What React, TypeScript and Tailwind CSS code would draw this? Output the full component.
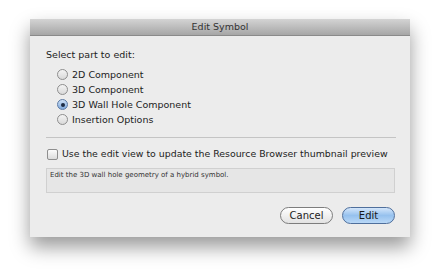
const font = "font-['DejaVu_Sans','Liberation_Sans',sans-serif]"

const parts = [
  { label: '2D Component', checked: false },
  { label: '3D Component', checked: false },
  { label: '3D Wall Hole Component', checked: true },
  { label: 'Insertion Options', checked: false },
]

function Radio({ checked }: { checked: boolean }) {
  return checked ? (
    <span className="flex h-[11px] w-[11px] shrink-0 items-center justify-center rounded-full border border-[#5b7aa6] bg-gradient-to-b from-[#cfe2f7] to-[#7fa9dc]">
      <span className="h-[4px] w-[4px] rounded-full bg-[#1d2c44]" />
    </span>
  ) : (
    <span className="h-[11px] w-[11px] shrink-0 rounded-full border border-[#8e8e8e] bg-gradient-to-b from-[#f4f4f4] to-[#d9d9d9]" />
  )
}

export default function App() {
  return (
    <div className={`h-[280px] w-[441px] bg-white pl-[30px] pt-[19px] ${font}`}>
      <div className="flex h-[218px] w-[380px] flex-col bg-[#ececec] shadow-[0_10px_18px_rgba(0,0,0,0.4)]">
        <div className="flex h-[17px] items-center justify-center border-b border-[#8a8a8a] bg-gradient-to-b from-[#d4d4d4] to-[#a6a6a6] text-[9.5px] text-[#333]">
          Edit Symbol
        </div>

        <div className="flex flex-1 flex-col pl-[16px] pr-[14px] text-[9.5px] text-[#222]">
          <div className="mt-[13px] leading-[12px]">Select part to edit:</div>

          <div className="mt-[6px] flex flex-col pl-[11px]">
            {parts.map((p) => (
              <div key={p.label} className="flex h-[15px] items-center gap-[4px]">
                <Radio checked={p.checked} />
                <span className="leading-[12px]">{p.label}</span>
              </div>
            ))}
          </div>

          <div className="mt-[10px] h-px bg-[#c4c4c4]" />

          <div className="mt-[10px] flex items-center gap-[4px] whitespace-nowrap pl-px">
            <span className="h-[11px] w-[11px] shrink-0 rounded-[2px] border border-[#8e8e8e] bg-gradient-to-b from-[#fbfbfb] to-[#dcdcdc]" />
            <span className="text-[9.4px] leading-[12px]">Use the edit view to update the Resource Browser thumbnail preview</span>
          </div>

          <div className="mr-px mt-[8px] h-[25px] border border-[#d0d0d0] bg-[#e6e6e6] px-[3px] pt-[2px] text-[7px] leading-[9px] text-[#333]">
            Edit the 3D wall hole geometry of a hybrid symbol.
          </div>

          <div className="mt-[14px] flex justify-end gap-[9px] pr-px">
            <button className="h-[17px] w-[53px] rounded-full border border-[#7d7d7d] bg-gradient-to-b from-white to-[#e2e2e2] text-[10px] leading-none text-[#222]">
              Cancel
            </button>
            <button className="h-[17px] w-[53px] rounded-full border border-[#4f6f9c] bg-gradient-to-b from-[#d4e6fa] via-[#96c1ee] to-[#b9d8f7] text-[10px] leading-none text-[#1a1a1a]">
              Edit
            </button>
          </div>
        </div>
      </div>
    </div>
  )
}
